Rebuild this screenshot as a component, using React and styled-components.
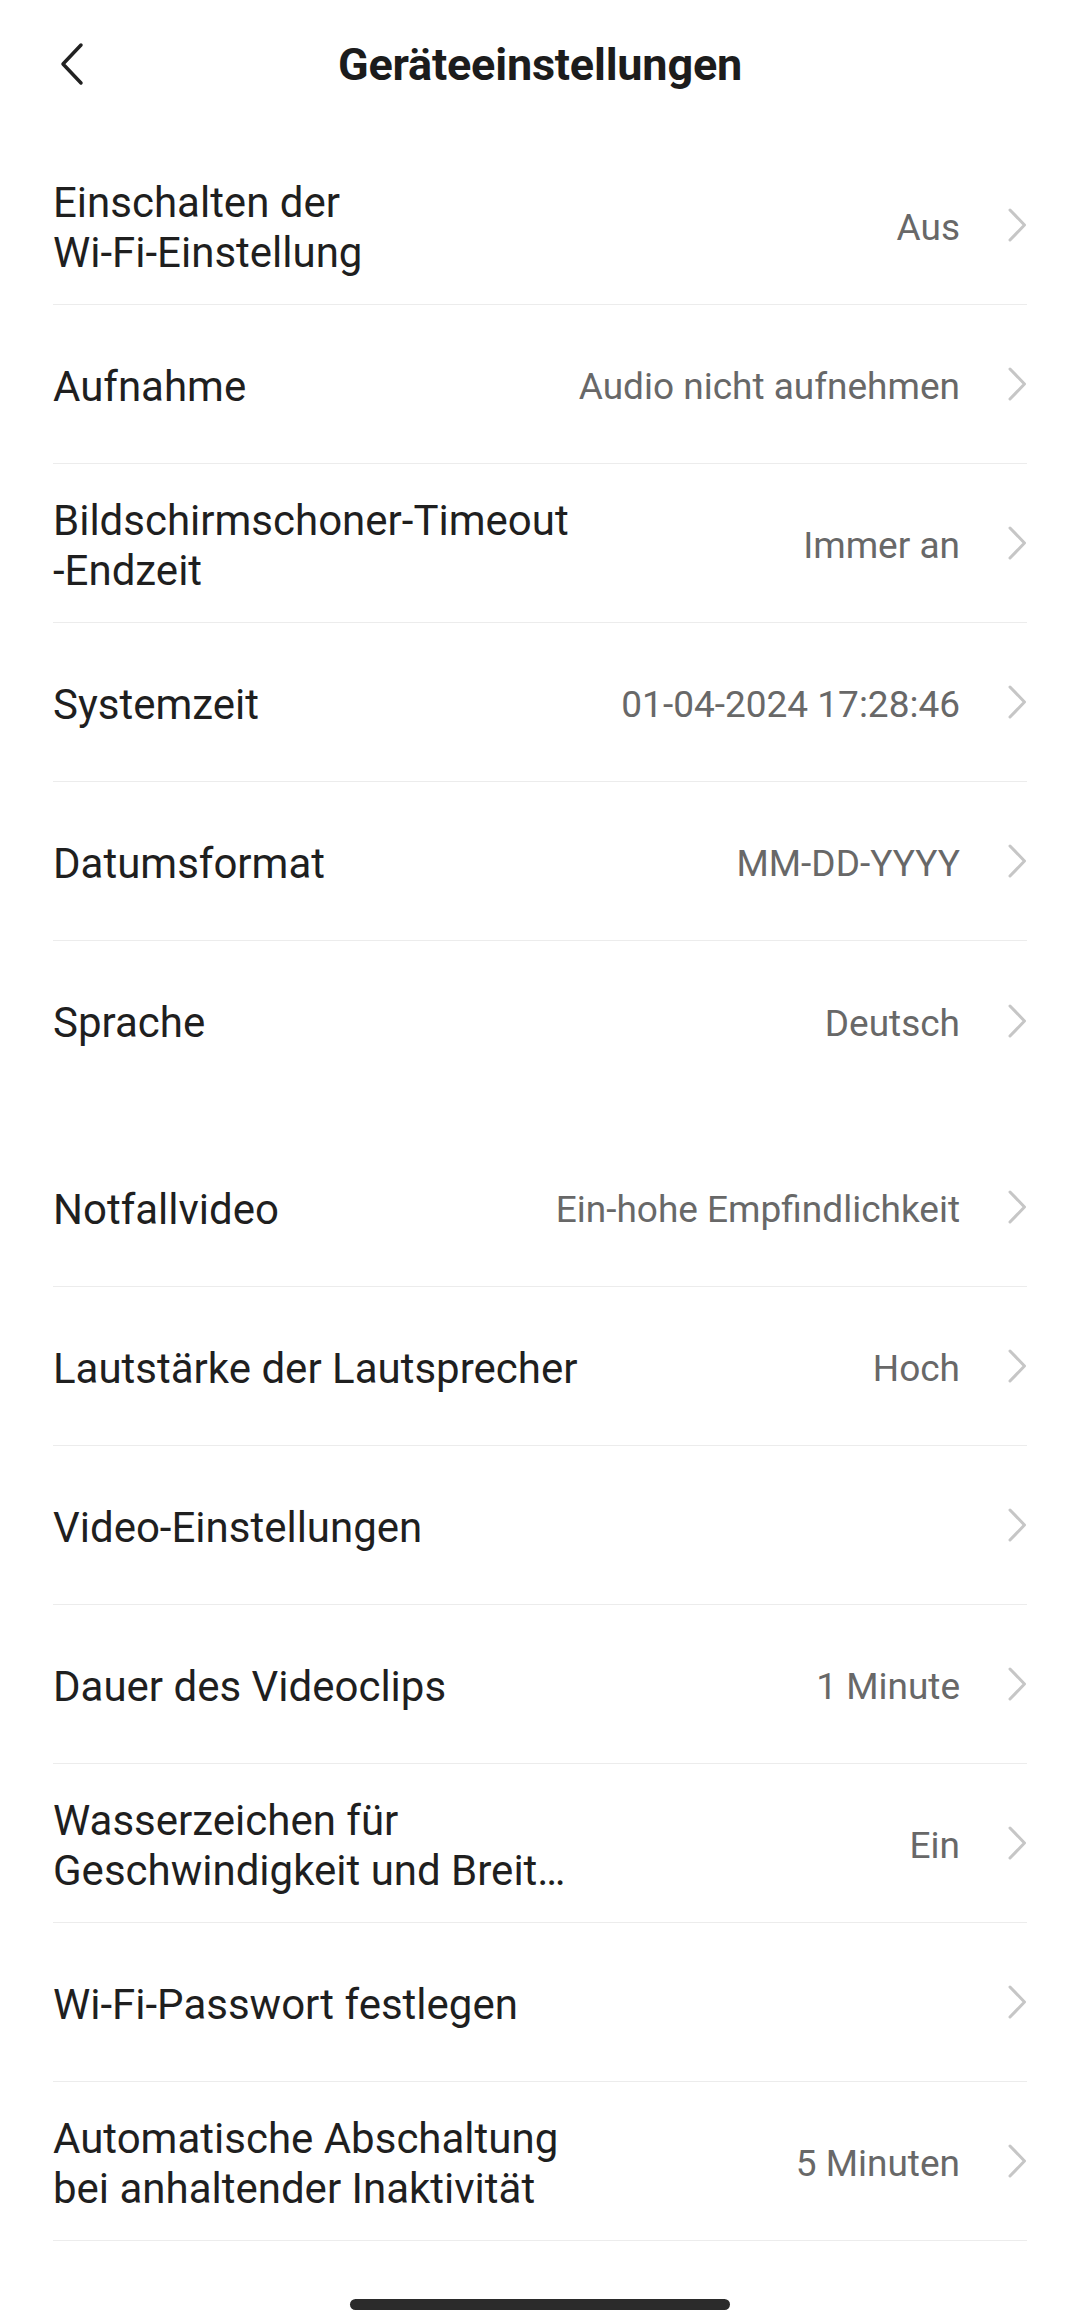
import React from "react";
import styled, { createGlobalStyle } from "styled-components";

const Global = createGlobalStyle`
  html, body {
    margin: 0;
    padding: 0;
    background: #ffffff;
  }
  body {
    font-family: Roboto, "Noto Sans", "Liberation Sans", sans-serif;
    -webkit-font-smoothing: antialiased;
  }
  * { box-sizing: border-box; }
`;

const Screen = styled.div`
  width: 1080px;
  min-height: 2324px;
  background: #ffffff;
  display: flex;
  flex-direction: column;
`;

const Header = styled.header`
  height: 128px;
  padding: 0 53px;
  display: grid;
  grid-template-columns: 1fr auto 1fr;
  align-items: center;
`;

const BackButton = styled.button`
  justify-self: start;
  width: 40px;
  height: 44px;
  padding: 0;
  border: none;
  background: transparent;
  display: flex;
  align-items: center;
  justify-content: center;
  cursor: pointer;
`;

const Title = styled.h1`
  margin: 0;
  font-size: 45px;
  font-weight: 700;
  color: #1c1c1c;
  letter-spacing: -0.2px;
  line-height: 1;
`;

const List = styled.section`
  padding: 18px 53px 0;
  display: flex;
  flex-direction: column;
`;

const Group = styled.div`
  display: flex;
  flex-direction: column;
  & + & {
    margin-top: 28px;
  }
`;

const Row = styled.div`
  height: 159px;
  padding-top: 5px;
  display: flex;
  align-items: center;
  border-bottom: ${(p) => (p.$noLine ? "none" : "1.5px solid #ececec")};
`;

const Label = styled.div`
  flex: 1;
  font-size: 42px;
  line-height: 50px;
  color: #1f1f1f;
  white-space: pre-line;
`;

const Value = styled.div`
  font-size: 37px;
  color: #686868;
  white-space: nowrap;
  margin-left: 24px;
`;

const Chevron = styled.svg`
  flex: none;
  margin-left: 47px;
  margin-top: -5px;
`;

const HomeBar = styled.div`
  width: 380px;
  height: 11px;
  border-radius: 6px;
  background: #2b2b2b;
  margin: 58px auto 0;
`;

const RightChevron = () => (
  <Chevron width="20" height="34" viewBox="0 0 20 34">
    <path
      d="M3 2 L17.5 17 L3 32"
      fill="none"
      stroke="#c6c6c6"
      strokeWidth="3"
      strokeLinecap="round"
      strokeLinejoin="round"
    />
  </Chevron>
);

const groups = [
  [
    { label: "Einschalten der\nWi-Fi-Einstellung", value: "Aus" },
    { label: "Aufnahme", value: "Audio nicht aufnehmen" },
    { label: "Bildschirmschoner-Timeout\n-Endzeit", value: "Immer an" },
    { label: "Systemzeit", value: "01-04-2024 17:28:46" },
    { label: "Datumsformat", value: "MM-DD-YYYY" },
    { label: "Sprache", value: "Deutsch", noLine: true },
  ],
  [
    { label: "Notfallvideo", value: "Ein-hohe Empfindlichkeit" },
    { label: "Lautstärke der Lautsprecher", value: "Hoch" },
    { label: "Video-Einstellungen", value: "" },
    { label: "Dauer des Videoclips", value: "1 Minute" },
    { label: "Wasserzeichen für\nGeschwindigkeit und Breit…", value: "Ein" },
    { label: "Wi-Fi-Passwort festlegen", value: "" },
    { label: "Automatische Abschaltung\nbei anhaltender Inaktivität", value: "5 Minuten" },
  ],
];

export default function App() {
  return (
    <>
      <Global />
      <Screen>
        <Header>
          <BackButton aria-label="Zurück">
            <svg width="40" height="44" viewBox="0 0 40 44">
              <path
                d="M28 3 L10 22 L28 41"
                fill="none"
                stroke="#222222"
                strokeWidth="3.5"
                strokeLinecap="round"
                strokeLinejoin="round"
              />
            </svg>
          </BackButton>
          <Title>Geräteeinstellungen</Title>
          <div />
        </Header>
        <List>
          {groups.map((items, gi) => (
            <Group key={gi}>
              {items.map((it) => (
                <Row key={it.label} $noLine={it.noLine}>
                  <Label>{it.label}</Label>
                  {it.value && <Value>{it.value}</Value>}
                  <RightChevron />
                </Row>
              ))}
            </Group>
          ))}
        </List>
        <HomeBar />
      </Screen>
    </>
  );
}
